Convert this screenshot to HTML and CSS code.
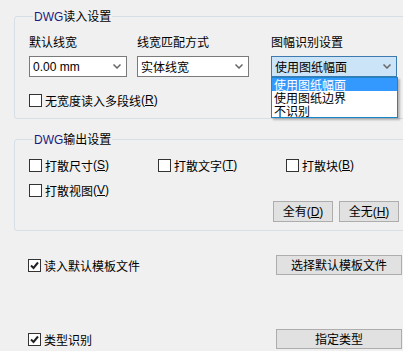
FILE: index.html
```html
<!DOCTYPE html>
<html lang="zh-CN">
<head>
    <meta charset="UTF-8">
    <title>DWG设置</title>
    <link rel="stylesheet" href="styles.css">
</head>
<body>
    <fieldset class="group group-read">
        <legend><span class="latin">DWG</span>读入设置</legend>
        <div class="combo-row">
            <div class="field field-width">
                <div class="field-label">默认线宽</div>
                <div class="combo">
                    <span class="latin">0.00 mm</span>
                    <svg class="chevron" width="8" height="5" viewBox="0 0 8 5"><path d="M0.5 0.5 L4 4 L7.5 0.5" fill="none" stroke="#666" stroke-width="1.5"/></svg>
                </div>
            </div>
            <div class="field field-match">
                <div class="field-label">线宽匹配方式</div>
                <div class="combo">
                    <span>实体线宽</span>
                    <svg class="chevron" width="8" height="5" viewBox="0 0 8 5"><path d="M0.5 0.5 L4 4 L7.5 0.5" fill="none" stroke="#666" stroke-width="1.5"/></svg>
                </div>
            </div>
            <div class="field field-frame">
                <div class="field-label">图幅识别设置</div>
                <div class="combo combo-open">
                    <span>使用图纸幅面</span>
                    <svg class="chevron" width="8" height="5" viewBox="0 0 8 5"><path d="M0.5 0.5 L4 4 L7.5 0.5" fill="none" stroke="#666" stroke-width="1.5"/></svg>
                </div>
                <ul class="dropdown">
                    <li class="selected">使用图纸幅面</li>
                    <li>使用图纸边界</li>
                    <li>不识别</li>
                </ul>
            </div>
        </div>
        <label class="check check-poly"><span class="box"></span>无宽度读入多段线<span class="latin">(<u>R</u>)</span></label>
    </fieldset>

    <fieldset class="group group-write">
        <legend><span class="latin">DWG</span>输出设置</legend>
        <div class="check-grid">
            <label class="check"><span class="box"></span>打散尺寸<span class="latin">(<u>S</u>)</span></label>
            <label class="check"><span class="box"></span>打散文字<span class="latin">(<u>T</u>)</span></label>
            <label class="check"><span class="box"></span>打散块<span class="latin">(<u>B</u>)</span></label>
            <label class="check"><span class="box"></span>打散视图<span class="latin">(<u>V</u>)</span></label>
        </div>
        <div class="button-row">
            <button class="btn btn-small">全有<span class="latin">(<u>D</u>)</span></button>
            <button class="btn btn-small">全无<span class="latin">(<u>H</u>)</span></button>
        </div>
    </fieldset>

    <div class="option-row option-template">
        <label class="check"><span class="box checked"><svg width="11" height="11" viewBox="0 0 11 11"><path d="M2 5.5 L4.5 8 L9 2.5" fill="none" stroke="#222" stroke-width="2"/></svg></span>读入默认模板文件</label>
        <button class="btn btn-wide">选择默认模板文件</button>
    </div>

    <div class="option-row option-type">
        <label class="check"><span class="box checked"><svg width="11" height="11" viewBox="0 0 11 11"><path d="M2 5.5 L4.5 8 L9 2.5" fill="none" stroke="#222" stroke-width="2"/></svg></span>类型识别</label>
        <button class="btn btn-wide">指定类型</button>
    </div>
</body>
</html>
```

FILE: styles.css
```css
html, body {
    margin: 0;
    padding: 0;
}
body {
    width: 403px;
    height: 351px;
    overflow: hidden;
    background-color: #f0f0f0;
    color: #000;
    font-family: "Noto Sans CJK SC", sans-serif;
    font-size: 12px;
    line-height: 14px;
}
.latin {
    font-family: "Liberation Sans", "Noto Sans CJK SC", sans-serif;
}
u {
    text-decoration: underline;
}

/* group boxes */
.group {
    margin: 0 -20px 0 14px;
    padding: 0;
    border: 1px solid #d5dfe5;
    border-radius: 3px;
    min-width: 0;
}
.group legend {
    margin-left: 4px;
    padding: 0 1px;
    line-height: 14px;
}
.group legend .latin {
    color: #1a1a80;
}
.group-read {
    margin-top: 9px;
    padding: 11px 0 11px 14px;
}
.group-write {
    margin-top: 13px;
    padding: 12px 0 8px 14px;
}

/* combo boxes */
.combo-row {
    display: flex;
}
.field-match {
    margin-left: 10px;
}
.field-frame {
    margin-left: 22px;
    position: relative;
}
.field-label {
    margin-bottom: 7px;
}
.combo {
    box-sizing: border-box;
    height: 21px;
    display: flex;
    align-items: center;
    justify-content: space-between;
    padding: 0 5px 0 3px;
    background: #fff;
    border: 1px solid #7a7a7a;
}
.field-width .combo {
    width: 98px;
}
.field-match .combo {
    width: 112px;
}
.field-frame .combo {
    width: 126px;
}
.combo-open {
    background: #cce4f7;
    border-color: #3d7ab0;
}
.chevron {
    display: block;
}
.dropdown {
    position: absolute;
    top: 42px;
    left: 0;
    width: 127px;
    box-sizing: border-box;
    margin: 0;
    padding: 0;
    list-style: none;
    background: #fff;
    border: 1px solid #1a86c8;
    box-shadow: 2px 2px 2px rgba(0,0,0,0.25);
}
.dropdown li {
    height: 13px;
    line-height: 13px;
    padding-left: 2px;
    white-space: nowrap;
}
.dropdown li.selected {
    background: #3399ff;
    color: #fff;
}

/* checkboxes */
.check {
    display: flex;
    align-items: center;
    height: 13px;
    line-height: 13px;
    white-space: nowrap;
}
.box {
    box-sizing: border-box;
    width: 13px;
    height: 13px;
    margin-right: 3px;
    background: #fff;
    border: 1px solid #333;
    flex-shrink: 0;
    display: flex;
    align-items: center;
    justify-content: center;
}
.check-poly {
    margin-top: 17px;
}
.check-grid {
    display: grid;
    grid-template-columns: 129px 128px auto;
    row-gap: 12px;
}

/* buttons */
.btn {
    box-sizing: border-box;
    height: 21px;
    padding: 0;
    background: #e1e1e1;
    border: 1px solid #adadad;
    font-family: "Noto Sans CJK SC", sans-serif;
    font-size: 12px;
    line-height: 14px;
    color: #000;
}
.button-row {
    display: flex;
    gap: 6px;
    margin: 4px 0 0 244px;
}
.btn-small {
    width: 60px;
}
.btn-wide {
    width: 126px;
    height: 20px;
}

/* bottom options */
.option-row {
    display: flex;
    align-items: center;
    justify-content: space-between;
    padding: 0 1px 0 28px;
}
.option-template {
    margin-top: 24px;
}
.option-type {
    margin-top: 54px;
}
```
